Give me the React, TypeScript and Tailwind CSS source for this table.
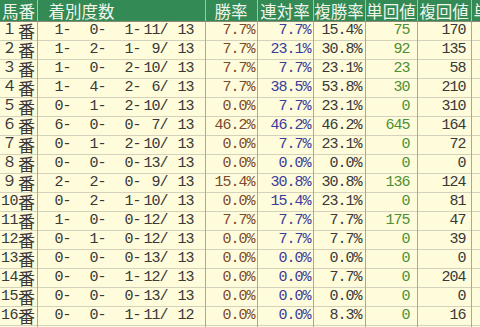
import React from "react";

type Row = {
  no: string;
  wide: boolean;
  rec: [string, string, string, string, string];
  win: string;
  ren: string;
  fuku: string;
  tan: string;
  fukuKai: string;
};

const raw: [string, string, string, string, string, string, string, string, string, string][] = [
  ["１", "1", "0", "1", "11", "13", "7.7%", "7.7%", "15.4%", "75|170"],
  ["２", "1", "2", "1", "9", "13", "7.7%", "23.1%", "30.8%", "92|135"],
  ["３", "1", "0", "2", "10", "13", "7.7%", "7.7%", "23.1%", "23|58"],
  ["４", "1", "4", "2", "6", "13", "7.7%", "38.5%", "53.8%", "30|210"],
  ["５", "0", "1", "2", "10", "13", "0.0%", "7.7%", "23.1%", "0|310"],
  ["６", "6", "0", "0", "7", "13", "46.2%", "46.2%", "46.2%", "645|164"],
  ["７", "0", "1", "2", "10", "13", "0.0%", "7.7%", "23.1%", "0|72"],
  ["８", "0", "0", "0", "13", "13", "0.0%", "0.0%", "0.0%", "0|0"],
  ["９", "2", "2", "0", "9", "13", "15.4%", "30.8%", "30.8%", "136|124"],
  ["10", "0", "2", "1", "10", "13", "0.0%", "15.4%", "23.1%", "0|81"],
  ["11", "1", "0", "0", "12", "13", "7.7%", "7.7%", "7.7%", "175|47"],
  ["12", "0", "1", "0", "12", "13", "0.0%", "7.7%", "7.7%", "0|39"],
  ["13", "0", "0", "0", "13", "13", "0.0%", "0.0%", "0.0%", "0|0"],
  ["14", "0", "0", "1", "12", "13", "0.0%", "0.0%", "7.7%", "0|204"],
  ["15", "0", "0", "0", "13", "13", "0.0%", "0.0%", "0.0%", "0|0"],
  ["16", "0", "0", "1", "11", "12", "0.0%", "0.0%", "8.3%", "0|16"],
  ["17", "0", "0", "0", "9", "9", "0.0%", "0.0%", "0.0%", "0|0"],
];

const rows: Row[] = raw.map((r) => {
  const [tan, fukuKai] = r[9].split("|");
  return {
    no: r[0],
    wide: r[0].length === 1,
    rec: [r[1], r[2], r[3], r[4], r[5]],
    win: r[6],
    ren: r[7],
    fuku: r[8],
    tan,
    fukuKai,
  };
});

const jp = { fontFamily: '"Noto Sans CJK JP", sans-serif' };
const mono = { fontFamily: '"Liberation Mono", "Noto Sans CJK JP", monospace' };

// one cell of the body, fixed 18px high so every row keeps a 19px pitch
const Cell = ({ className = "", children }: { className?: string; children?: React.ReactNode }) => (
  <div className={`h-[18px] flex items-center overflow-hidden whitespace-nowrap ${className}`}>{children}</div>
);

const App = () => {
  return (
    <div className="w-[480px] h-[327px] overflow-hidden bg-[#fffcdc]">
      <table className="table-fixed border-collapse w-[540px] text-[15px] tracking-[-1px] leading-[18px]" style={mono}>
        <colgroup>
          <col className="w-[37px]" />
          <col className="w-[168px]" />
          <col className="w-[52px]" />
          <col className="w-[56px]" />
          <col className="w-[52px]" />
          <col className="w-[52px]" />
          <col className="w-[54px]" />
          <col className="w-[69px]" />
        </colgroup>
        {/* header */}
        <thead>
          <tr className="bg-[#338a55] text-[#f2f5ea] text-[16.5px] tracking-normal" style={jp}>
            <th className="p-0 font-normal border-r border-[#9cc8a8] border-b border-b-[#8a8a7a]">
              <div className="h-[21px] flex items-center pl-[2px]">馬番</div>
            </th>
            <th className="p-0 font-normal border-r border-[#9cc8a8] border-b border-b-[#8a8a7a]">
              <div className="h-[21px] flex items-center pl-[11px]">着別度数</div>
            </th>
            <th className="p-0 font-normal border-r border-[#9cc8a8] border-b border-b-[#8a8a7a]">
              <div className="h-[21px] flex items-center justify-center">勝率</div>
            </th>
            <th className="p-0 font-normal border-r border-[#9cc8a8] border-b border-b-[#8a8a7a]">
              <div className="h-[21px] flex items-center justify-center">連対率</div>
            </th>
            <th className="p-0 font-normal border-r border-[#9cc8a8] border-b border-b-[#8a8a7a]">
              <div className="h-[21px] flex items-center justify-center">複勝率</div>
            </th>
            <th className="p-0 font-normal border-r border-[#9cc8a8] border-b border-b-[#8a8a7a]">
              <div className="h-[21px] flex items-center justify-center">単回値</div>
            </th>
            <th className="p-0 font-normal border-r border-[#9cc8a8] border-b border-b-[#8a8a7a]">
              <div className="h-[21px] flex items-center justify-center">複回値</div>
            </th>
            <th className="p-0 font-normal border-b border-b-[#8a8a7a]">
              <div className="h-[21px] flex items-center pl-[2px]">単勝率</div>
            </th>
          </tr>
        </thead>
        <tbody>
          {rows.map((r) => (
            <tr key={r.no} className="border-b border-[#d4d2bc] text-[#383838]">
              <td className="p-0 border-r border-[#a9a89a]">
                <Cell className="pl-[1px]">
                  {r.wide ? (
                    <span className="w-[17px] text-center tracking-normal">{r.no}</span>
                  ) : (
                    <span className="w-[17px] tracking-[-0.5px]">{r.no}</span>
                  )}
                  <span className="text-[17px] leading-[18px] tracking-normal" style={jp}>番</span>
                </Cell>
              </td>
              <td className="p-0 border-r border-[#a9a89a]">
                <Cell>
                  <span className="w-[33px] text-right">{r.rec[0]}-</span>
                  <span className="w-[35px] text-right">{r.rec[1]}-</span>
                  <span className="w-[35px] text-right">{r.rec[2]}-</span>
                  <span className="w-[27px] text-right">{r.rec[3]}/</span>
                  <span className="w-[26px] text-right">{r.rec[4]}</span>
                </Cell>
              </td>
              <td className="p-0 border-r border-[#a9a89a] text-[#7b4a2c]">
                <Cell className="justify-end pr-[2px]">{r.win}</Cell>
              </td>
              <td className="p-0 border-r border-[#a9a89a] text-[#3b3b9b]">
                <Cell className="justify-end pr-[2px]">{r.ren}</Cell>
              </td>
              <td className="p-0 border-r border-[#a9a89a]">
                <Cell className="justify-end pr-[3px]">{r.fuku}</Cell>
              </td>
              <td className="p-0 border-r border-[#a9a89a] text-[#4d8f34]">
                <Cell className="justify-end pr-[7px]">{r.tan}</Cell>
              </td>
              <td className="p-0 border-r border-[#a9a89a]">
                <Cell className="justify-end pr-[5px]">{r.fukuKai}</Cell>
              </td>
              <td className="p-0">
                <Cell />
              </td>
            </tr>
          ))}
        </tbody>
      </table>
    </div>
  );
};

export default App;
